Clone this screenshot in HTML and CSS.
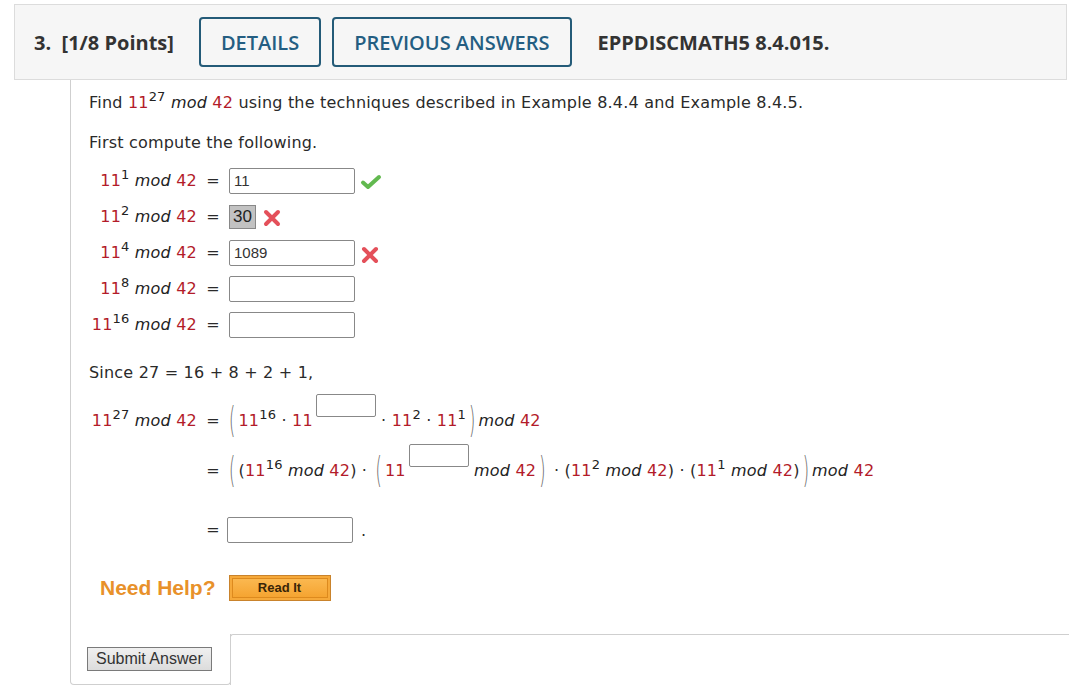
FILE: index.html
```html
<!DOCTYPE html>
<html>
<head>
<meta charset="utf-8">
<link rel="stylesheet" href="styles.css">
</head>
<body>
<div class="header">
  <span class="points">3.&nbsp; [1/8 Points]</span>
  <span class="hbtn">DETAILS</span>
  <span class="hbtn">PREVIOUS ANSWERS</span>
  <span class="code">EPPDISCMATH5 8.4.015.</span>
</div>
<div class="question">
  <div class="qbody">
    <p class="intro">Find <span class="r">11</span><sup>27</sup> <i>mod</i> <span class="r">42</span> using the techniques described in Example 8.4.4 and Example 8.4.5.</p>
    <p class="first">First compute the following.</p>
    <div class="compute">
      <div class="crow">
        <span class="lbl"><span class="r">11</span><sup>1</sup> <i>mod</i> <span class="r">42</span></span><span class="eq">=</span>
        <span class="inp">11</span><svg class="ico check" width="22" height="16" viewBox="0 0 22 16"><path d="M3 8.5 L8 13 L19 3" fill="none" stroke="#62b94f" stroke-width="4" stroke-linecap="round" stroke-linejoin="round"/></svg>
      </div>
      <div class="crow">
        <span class="lbl"><span class="r">11</span><sup>2</sup> <i>mod</i> <span class="r">42</span></span><span class="eq">=</span>
        <span class="graybox">30</span><svg class="ico x" width="18" height="18" viewBox="0 0 18 18"><path d="M3 3 L15 15 M15 3 L3 15" fill="none" stroke="#e4505a" stroke-width="4" stroke-linecap="round"/></svg>
      </div>
      <div class="crow">
        <span class="lbl"><span class="r">11</span><sup>4</sup> <i>mod</i> <span class="r">42</span></span><span class="eq">=</span>
        <span class="inp">1089</span><svg class="ico x2" width="18" height="18" viewBox="0 0 18 18"><path d="M3 3 L15 15 M15 3 L3 15" fill="none" stroke="#e4505a" stroke-width="4" stroke-linecap="round"/></svg>
      </div>
      <div class="crow">
        <span class="lbl"><span class="r">11</span><sup>8</sup> <i>mod</i> <span class="r">42</span></span><span class="eq">=</span>
        <span class="inp"></span>
      </div>
      <div class="crow">
        <span class="lbl"><span class="r">11</span><sup>16</sup> <i>mod</i> <span class="r">42</span></span><span class="eq">=</span>
        <span class="inp"></span>
      </div>
    </div>
    <p class="since">Since 27 = 16 + 8 + 2 + 1,</p>
    <div class="erow e1">
      <span class="lbl"><span class="r">11</span><sup>27</sup> <i>mod</i> <span class="r">42</span></span><span class="eq">=</span>
      <span class="expr"><span class="bp">(</span><span class="r">11</span><sup>16</sup> · <span class="r">11</span><span class="exbox"></span> · <span class="r">11</span><sup>2</sup> · <span class="r">11</span><sup>1</sup><span class="bp">)</span><i>mod</i> <span class="r">42</span></span>
    </div>
    <div class="erow e2">
      <span class="lbl"></span><span class="eq">=</span>
      <span class="expr"><span class="bp">(</span>(<span class="r">11</span><sup>16</sup> <i>mod</i> <span class="r">42</span>) · <span class="bp">(</span><span class="r">11</span><span class="exbox"></span> <i>mod</i> <span class="r">42</span><span class="bp">)</span> · (<span class="r">11</span><sup>2</sup> <i>mod</i> <span class="r">42</span>) · (<span class="r">11</span><sup>1</sup> <i>mod</i> <span class="r">42</span>)<span class="bp">)</span><i>mod</i> <span class="r">42</span></span>
    </div>
    <div class="erow e3">
      <span class="lbl"></span><span class="eq">=</span>
      <span class="inp"></span><span class="dot">.</span>
    </div>
    <div class="help">
      <span class="need">Need Help?</span>
      <span class="readit"><span>Read It</span></span>
    </div>
  </div>
  <div class="footer">
    <div class="submit-cell"><span class="submit">Submit Answer</span></div>
    <div class="rest"></div>
  </div>
</div>
</body>
</html>
```

FILE: styles.css
```css
html, body { margin: 0; padding: 0; background: #fff; }
body { font-family: "DejaVu Sans", Verdana, sans-serif; color: #2a2a2a; }

.header {
  margin: 4px 2px 0 14px;
  height: 74px;
  background: #f6f6f6;
  border: 1px solid #dcdcdc;
  display: flex;
  align-items: center;
  padding-left: 19px;
  font-family: "Open Sans", sans-serif;
}
.points { font-size: 20px; font-weight: 700; color: #333; margin-right: 25px; }
.hbtn {
  height: 46px;
  display: flex;
  align-items: center;
  padding: 0 20px;
  border: 2px solid #245b78;
  border-radius: 4px;
  color: #245e82;
  font-size: 20px;
  font-weight: 600;
  margin-right: 11px;
}
.code { margin-left: 15px; font-size: 20px; font-weight: 700; color: #333; }

.question { margin-left: 70px; }
.qbody {
  border-left: 1px solid #cfcfcf;
  padding: 13px 0 33px 18px;
  font-size: 16px;
  letter-spacing: 0.2px;
}
.qbody p { margin: 0; line-height: 20px; }
.r { color: #b31b2a; }
i { font-style: italic; color: #222; }
sup { font-size: 13px; line-height: 0; vertical-align: 7px; color: #222; }

.first { margin-top: 20px !important; }

.compute { margin-top: 15px; display: flex; flex-direction: column; gap: 10px; }
.crow { display: flex; align-items: center; height: 26px; }
.lbl { width: 108px; flex: none; text-align: right; white-space: nowrap; line-height: 20px; }
.eq { width: 32px; flex: none; text-align: center; line-height: 20px; }
.inp {
  display: inline-block;
  box-sizing: border-box;
  width: 126px;
  height: 26px;
  border: 1px solid #888;
  border-radius: 2px;
  font-family: "Liberation Sans", Arial, sans-serif;
  font-size: 15px;
  letter-spacing: 0;
  line-height: 24px;
  padding-left: 4px;
  color: #333;
}
.graybox {
  display: inline-block;
  box-sizing: border-box;
  height: 24px;
  padding: 0 3px;
  background: #c2c2c2;
  border: 1px solid #888;
  font-family: "Liberation Sans", Arial, sans-serif;
  font-size: 17px;
  letter-spacing: 0;
  line-height: 22px;
  color: #222;
}
.ico { display: block; flex: none; }
.check { margin-left: 5px; margin-top: 2px; }
.x { margin-left: 7px; margin-top: 2px; }
.x2 { margin-left: 6px; margin-top: 4px; }

.since { margin-top: 25px !important; }

.erow { display: flex; align-items: baseline; white-space: nowrap; }
.erow .lbl, .erow .eq, .expr { line-height: 20px; }
.e1 { margin-top: 11px; }
.e2 { margin-top: 13px; }
.e3 { margin-top: 36px; align-items: center; }
.expr { margin-left: -3px; }
.bp {
  display: inline-block;
  transform: scaleY(2.2);
  color: #666;
  font-family: "DejaVu Sans ExtraLight", "DejaVu Sans", sans-serif;
  font-weight: 200;
  margin: 0 3px;
}
.exbox {
  display: inline-block;
  width: 60px;
  height: 23px;
  box-sizing: border-box;
  border: 1px solid #888;
  border-radius: 2px;
  vertical-align: 9px;
  margin-left: 3px;
}
.e3 .inp { margin-left: -2px; }
.dot { margin-left: 8px; }

.help { display: flex; align-items: center; margin-top: 32px; padding-left: 11px; height: 26px; }
.need {
  font-family: "Liberation Sans", Arial, sans-serif;
  font-weight: 700;
  font-size: 21px;
  letter-spacing: 0;
  color: #e8912a;
  margin-right: 13px;
}
.readit {
  display: inline-block;
  border: 1px solid #c9832c;
  background: #f6a93a;
  padding: 2px;
}
.readit span {
  display: block;
  width: 94px;
  height: 18px;
  border: 1px solid #dd8a1e;
  background: linear-gradient(#fbb850, #f5a431);
  text-align: center;
  font-family: "Liberation Sans", Arial, sans-serif;
  font-weight: 700;
  font-size: 13px;
  letter-spacing: 0;
  line-height: 18px;
  color: #3a2608;
}

.footer { display: flex; }
.submit-cell {
  width: 161px;
  height: 51px;
  box-sizing: border-box;
  border-left: 1px solid #cfcfcf;
  border-right: 1px solid #cfcfcf;
  border-bottom: 1px solid #cfcfcf;
  border-radius: 0 0 4px 4px;
  display: flex;
  align-items: center;
  padding-left: 16px;
}
.submit {
  display: inline-block;
  border: 1px solid #7a7a7a;
  background: linear-gradient(#f0f0f0, #dcdcdc);
  font-family: "Liberation Sans", Arial, sans-serif;
  font-size: 16px;
  color: #333;
  padding: 0 8px;
  height: 22px;
  line-height: 22px;
}
.rest { flex: 1; border-top: 1px solid #cfcfcf; border-left: 1px solid #cfcfcf; border-top-left-radius: 3px; margin-left: -1px; }
```
